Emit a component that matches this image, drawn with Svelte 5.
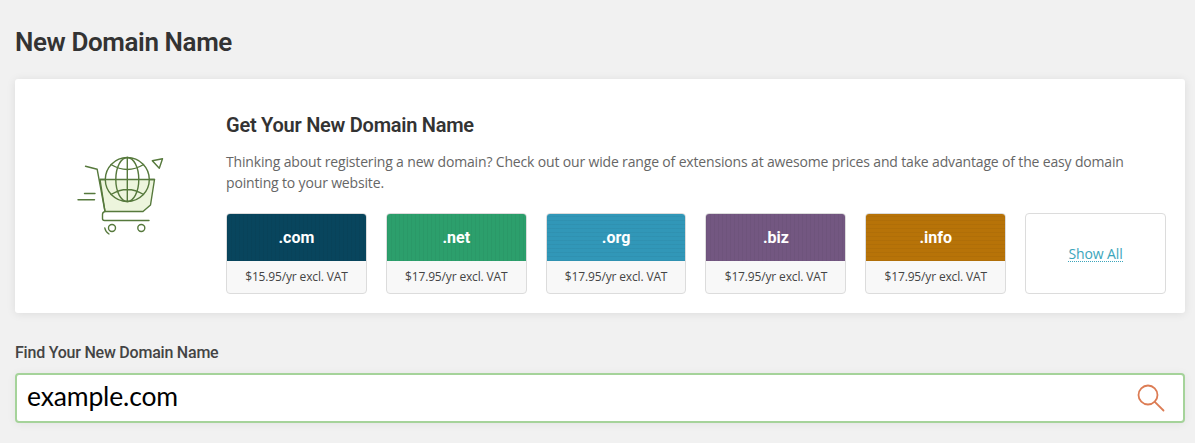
<script>
  const extensions = [
    { name: '.com', price: '$15.95/yr excl. VAT', tone: 'navy' },
    { name: '.net', price: '$17.95/yr excl. VAT', tone: 'green' },
    { name: '.org', price: '$17.95/yr excl. VAT', tone: 'blue' },
    { name: '.biz', price: '$17.95/yr excl. VAT', tone: 'purple' },
    { name: '.info', price: '$17.95/yr excl. VAT', tone: 'amber' }
  ];
  let query = $state('example.com');
</script>

<main>
  <h1>New Domain Name</h1>

  <section class="panel">
    <div class="art">
      <svg width="100" height="100" viewBox="0 0 100 100" fill="none" stroke="#56793c" stroke-width="1.4" stroke-linecap="round" stroke-linejoin="round">
        <path d="M30 34.5H84.5L80.5 60 73 66.5H35z" fill="#edf5dd" />
        <circle cx="57.3" cy="34.5" r="22" fill="#fff" stroke="none" />
        <path d="M35.3 34.5a22 22 0 0 0 44 0z" fill="#edf5dd" stroke="none" />
        <circle cx="57.3" cy="34.5" r="22" />
        <ellipse cx="57.3" cy="34.5" rx="11.5" ry="22" />
        <path d="M57.3 12.5v44M30 34.5h54.5M41 19.5q16.3 10 32.6 0M41 49.5q16.3-10 32.6 0" />
        <path d="M15.5 21.2 27.2 24.3 35 66.5M35 66.5q-2.500 .5-2.500 3v4q0 2 2 2H79M14.500 48.500h10.500M8 54.700h16.500M82.300 15.700 92.500 13.700 89.300 23.300zM34.800 83q.7 4 4.200 6" />
        <circle cx="42" cy="83" r="3.5" />
        <circle cx="71.3" cy="83" r="3.5" />
      </svg>
    </div>
    <div class="content">
      <h2>Get Your New Domain Name</h2>
      <p>Thinking about registering a new domain? Check out our wide range of extensions at awesome prices and take advantage of the easy domain pointing to your website.</p>
      <div class="cards">
        {#each extensions as ext}
          <div class="card">
            <div class="name {ext.tone}">{ext.name}</div>
            <div class="price">{ext.price}</div>
          </div>
        {/each}
        <div class="card all"><a href="#all">Show All</a></div>
      </div>
    </div>
  </section>

  <label for="domain">Find Your New Domain Name</label>
  <div class="search">
    <input id="domain" type="text" bind:value={query} spellcheck="false" />
    <button aria-label="Search">
      <svg width="28" height="28" viewBox="0 0 28 28" fill="none" stroke="#dc7c54" stroke-width="1.8" stroke-linecap="round">
        <circle cx="11" cy="11" r="9.5" />
        <path d="m17.8 17.8 8.7 8.7" />
      </svg>
    </button>
  </div>
</main>

<style>
  :global(body) { margin: 0; background: #f1f1f1; }
  main { box-sizing: border-box; height: 443px; padding: 26px 10px 0 15px; overflow: hidden; font-family: Roboto, sans-serif; color: #333; }
  h1 { margin: 0 0 21px; font-size: 26px; line-height: 32px; font-weight: 600; letter-spacing: -.4px; }
  .panel { box-sizing: border-box; height: 234px; display: flex; background: #fff; border-radius: 3px; box-shadow: 0 1px 10px rgba(0, 0, 0, .09); }
  .art { width: 211px; flex: none; padding: 66px 0 0 55px; box-sizing: border-box; }
  .art svg { display: block; }
  .content { flex: 1; padding: 34px 19px 0 0; }
  h2 { margin: 0; font-size: 20px; line-height: 24px; font-weight: 600; letter-spacing: -.25px; }
  p { margin: 14px 0 20px; font: 14px/21px "Open Sans", sans-serif; letter-spacing: -.16px; color: #666; }
  .cards { display: grid; grid-template-columns: repeat(6, 1fr); gap: 19px; }
  .card { box-sizing: border-box; height: 81px; border: 1px solid #dcdcdc; border-radius: 4px; overflow: hidden; background: #f8f8f8; text-align: center; }
  .name { height: 47px; line-height: 48px; font-size: 16px; font-weight: 700; color: #fff; background-image: repeating-linear-gradient(90deg, rgba(0, 0, 0, .04) 0 1px, transparent 1px 4px); }
  .navy { background-color: #08455d; }
  .green { background-color: #2c9f6c; }
  .blue { background-color: #3197b8; }
  .purple { background-color: #735781; }
  .amber { background-color: #b77308; }
  .blue, .amber { background-image: repeating-linear-gradient(0deg, rgba(0, 0, 0, .04) 0 1px, transparent 1px 4px); }
  .price { font: 12px/31px "Open Sans", sans-serif; letter-spacing: -.15px; color: #444; }
  .all { display: flex; align-items: center; justify-content: center; background: #fff; }
  .all a { font: 14px/15px "Open Sans", sans-serif; letter-spacing: -.1px; color: #3ba5bb; text-decoration: none; border-bottom: 1px dotted #3ba5bb; }
  label { display: block; margin: 30px 0 11px; font-size: 16px; line-height: 19px; font-weight: 500; letter-spacing: -.22px; color: #444; }
  .search { box-sizing: border-box; height: 50px; display: flex; align-items: center; padding: 0 18px 0 10px; background: #fff; border: 2px solid #a5d39a; border-radius: 4px; box-shadow: 0 1px 10px rgba(0, 0, 0, .06); }
  input { flex: 1; min-width: 0; padding: 0 0 5px; border: 0; outline: 0; background: none; font: 26.5px/38px Lato, sans-serif; letter-spacing: -.15px; color: #000; }
  button { padding: 0; border: 0; background: none; }
  button svg { display: block; }
</style>
